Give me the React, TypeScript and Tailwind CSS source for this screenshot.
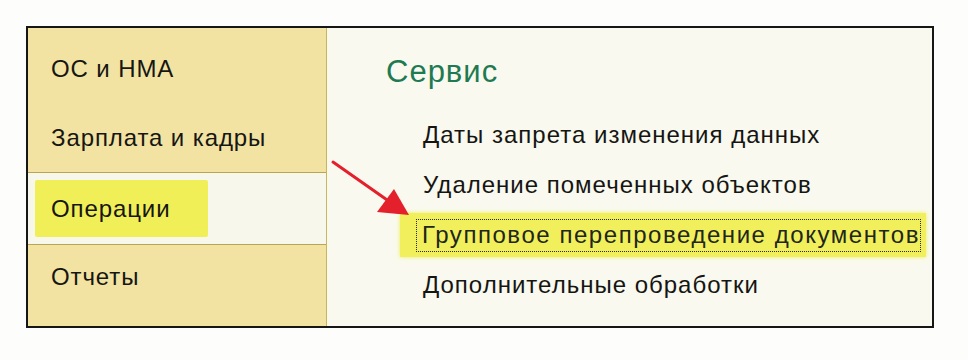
const leftFont = { fontFamily: '"Liberation Sans", Arial, sans-serif' };

export default function App() {
  return (
    <div className="relative w-[968px] h-[360px] bg-[#fdfdfb] pt-[26px] pl-[26px]" style={leftFont}>
      {/* Panel */}
      <div className="flex w-[908px] h-[302px] border-2 border-[#161616]">
        {/* Sections */}
        <div className="w-[299px] flex flex-col bg-[#f2e3a2] border-r border-[#c9b55e] text-[24px] tracking-[0.9px] text-[#161612]">
          <div className="h-[145px] pt-[6px] border-b border-[#b9a654]">
            <div className="h-[69px] flex items-center pl-[23px] leading-none">ОС и НМА</div>
            <div className="h-[69px] flex items-center pl-[23px] leading-none">Зарплата и кадры</div>
          </div>
          <div className="h-[72px] flex items-center pl-[7px] bg-[#f8f7ec] border-b border-[#b9a654]">
            <div className="w-[173px] h-[57px] flex items-center pl-[16px] leading-none bg-[#f1ef58] rounded-[2px]">
              Операции
            </div>
          </div>
          <div className="h-[64px] flex items-center pl-[23px] leading-none">Отчеты</div>
        </div>

        {/* Content */}
        <div className="flex-1 bg-[#f9f9ef] flex flex-col pt-[28px] text-[#151512]">
          <div className="h-[31px] flex items-center pl-[59px] text-[31px] tracking-[1px] leading-none text-[#1f7a52]">
            Сервис
          </div>
          <div className="mt-[23px] flex flex-col text-[24px] tracking-[1px] leading-none">
            <div className="h-[50px] flex items-center pl-[96px]">Даты запрета изменения данных</div>
            <div className="h-[50px] flex items-center pl-[96px]">Удаление помеченных объектов</div>
            <div className="h-[50px] flex items-center pl-[73px]">
              <div className="w-[526px] h-[44px] flex items-center pl-[16px] bg-[#f1f05c] shadow-[0_0_4px_#f1f05c]">
                <span className="h-[33px] w-[505px] flex items-center pl-[5px] border border-dotted border-[#2a2a18] text-[#22261a] tracking-[1.55px] whitespace-nowrap">
                  Групповое перепроведение документов
                </span>
              </div>
            </div>
            <div className="h-[50px] flex items-center pl-[96px]">Дополнительные обработки</div>
          </div>
        </div>
      </div>

      {/* Red pointer arrow */}
      <svg className="absolute top-0 left-0 pointer-events-none" width="968" height="360" viewBox="0 0 968 360">
        <line x1="333" y1="162" x2="390" y2="202" stroke="#e3202c" strokeWidth="3" strokeLinecap="round" />
        <polygon points="409,215 377,212 394,189" fill="#e3202c" />
      </svg>
    </div>
  );
}
